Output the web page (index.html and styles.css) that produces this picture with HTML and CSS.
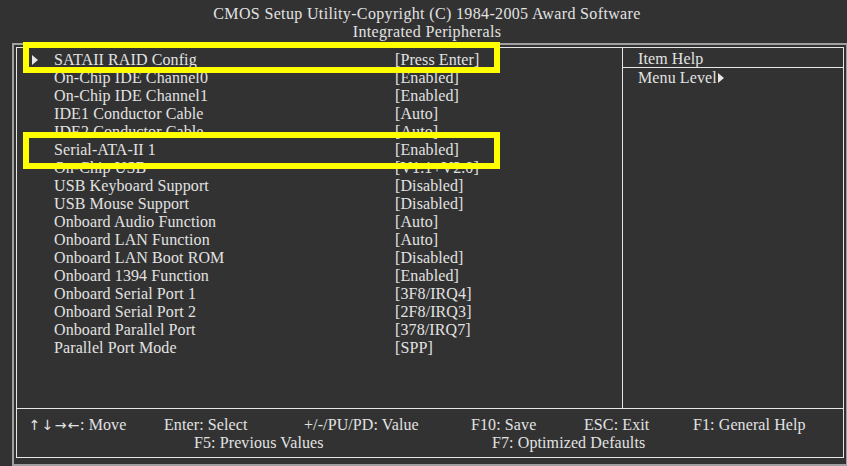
FILE: index.html
```html
<!DOCTYPE html>
<html>
<head>
<meta charset="utf-8">
<link rel="stylesheet" href="styles.css">
</head>
<body>
<div class="screen">
  <header class="title">
    <div>CMOS Setup Utility-Copyright (C) 1984-2005 Award Software</div>
    <div>Integrated Peripherals</div>
  </header>
  <div class="frame">
    <div class="inner">
      <div class="main">
        <div class="list">
          <div class="row"><span class="mark"><svg width="6" height="10" viewBox="0 0 6 10"><polygon points="0,0 6,5 0,10" fill="#e6e6e6"/></svg></span><span class="label">SATAII RAID Config</span><span class="value">[Press Enter]</span></div>
          <div class="row"><span class="mark"></span><span class="label">On-Chip IDE Channel0</span><span class="value">[Enabled]</span></div>
          <div class="row"><span class="mark"></span><span class="label">On-Chip IDE Channel1</span><span class="value">[Enabled]</span></div>
          <div class="row"><span class="mark"></span><span class="label">IDE1 Conductor Cable</span><span class="value">[Auto]</span></div>
          <div class="row"><span class="mark"></span><span class="label">IDE2 Conductor Cable</span><span class="value">[Auto]</span></div>
          <div class="row"><span class="mark"></span><span class="label">Serial-ATA-II 1</span><span class="value">[Enabled]</span></div>
          <div class="row"><span class="mark"></span><span class="label">On-Chip USB</span><span class="value">[V1.1+V2.0]</span></div>
          <div class="row"><span class="mark"></span><span class="label">USB Keyboard Support</span><span class="value">[Disabled]</span></div>
          <div class="row"><span class="mark"></span><span class="label">USB Mouse Support</span><span class="value">[Disabled]</span></div>
          <div class="row"><span class="mark"></span><span class="label">Onboard Audio Function</span><span class="value">[Auto]</span></div>
          <div class="row"><span class="mark"></span><span class="label">Onboard LAN Function</span><span class="value">[Auto]</span></div>
          <div class="row"><span class="mark"></span><span class="label">Onboard LAN Boot ROM</span><span class="value">[Disabled]</span></div>
          <div class="row"><span class="mark"></span><span class="label">Onboard 1394 Function</span><span class="value">[Enabled]</span></div>
          <div class="row"><span class="mark"></span><span class="label">Onboard Serial Port 1</span><span class="value">[3F8/IRQ4]</span></div>
          <div class="row"><span class="mark"></span><span class="label">Onboard Serial Port 2</span><span class="value">[2F8/IRQ3]</span></div>
          <div class="row"><span class="mark"></span><span class="label">Onboard Parallel Port</span><span class="value">[378/IRQ7]</span></div>
          <div class="row"><span class="mark"></span><span class="label">Parallel Port Mode</span><span class="value">[SPP]</span></div>
        </div>
        <div class="help">
          <div class="help-head">Item Help</div>
          <div class="help-body">Menu Level<svg class="lvl" width="6" height="10" viewBox="0 0 6 10"><polygon points="0,0 6,5 0,10" fill="#e6e6e6"/></svg></div>
        </div>
      </div>
      <div class="footer">
        <span class="c1"><span class="arrows"><span class="ar">↑</span><span class="ar">↓</span><span class="ar">→</span><span class="ar">←</span></span>: Move</span>
        <span class="c2">Enter: Select</span>
        <span class="c4">+/-/PU/PD: Value</span>
        <span class="c5">F10: Save</span>
        <span class="c7">ESC: Exit</span>
        <span class="c8">F1: General Help</span>
        <span class="c3 l2">F5: Previous Values</span>
        <span class="c6 l2">F7: Optimized Defaults</span>
      </div>
    </div>
  </div>
  <div class="hl hl-a"></div>
  <div class="hl hl-b"></div>
</div>
</body>
</html>
```
FILE: styles.css
```css
html, body {
  margin: 0;
  padding: 0;
  background: #323232;
}
.screen {
  position: relative;
  width: 847px;
  height: 466px;
  background: #323232;
  color: #e2e2e2;
  font-family: "Liberation Serif", "Times New Roman", serif;
  font-size: 16px;
  letter-spacing: 0.1px;
  overflow: hidden;
}
.title {
  padding-top: 5px;
  padding-left: 7px;
  line-height: 18px;
  height: 38px;
  text-align: center;
  letter-spacing: 0.35px;
}
.frame {
  margin-left: 12px;
  width: 828px;
  height: 415px;
  border: 2px solid #a0a0a0;
  padding: 2px;
}
.inner {
  height: 409px;
  border: 1px solid #e6e6e6;
  display: flex;
  flex-direction: column;
}
.main {
  height: 360px;
  display: flex;
  border-bottom: 1px solid #e6e6e6;
}
.list {
  width: 605px;
  padding-top: 3px;
  border-right: 1px solid #e6e6e6;
}
.row {
  display: grid;
  grid-template-columns: 37px 341px auto;
  line-height: 18px;
  height: 18px;
  white-space: nowrap;
}
.mark {
  display: flex;
  align-items: center;
  padding-left: 15px;
}
.help {
  flex: 1;
  display: flex;
  flex-direction: column;
}
.help-head {
  padding-top: 3px;
  height: 16px;
  line-height: 16px;
  padding-left: 15px;
  border-bottom: 1px solid #e6e6e6;
}
.help-body {
  padding-top: 1px;
  padding-left: 15px;
  line-height: 18px;
  display: flex;
  align-items: center;
  height: 18px;
}
.lvl {
  margin-left: 1px;
}
.footer {
  flex: 1;
  padding-top: 7px;
  padding-left: 11px;
  display: grid;
  grid-template-columns: 136px 30px 110px 167px 21px 92px 109px auto;
  grid-template-rows: 18px 18px;
  line-height: 18px;
  white-space: nowrap;
}
.arrows {
  font-family: "DejaVu Sans", sans-serif;
  font-size: 14px;
  letter-spacing: 0;
}
.ar {
  display: inline-block;
  width: 13px;
  text-align: center;
}
.c1 { grid-column: 1; grid-row: 1; }
.c2 { grid-column: 2; grid-row: 1; }
.c3 { grid-column: 3; grid-row: 2; }
.c4 { grid-column: 4; grid-row: 1; }
.c5 { grid-column: 5; grid-row: 1; }
.c6 { grid-column: 6; grid-row: 2; }
.c7 { grid-column: 7; grid-row: 1; }
.c8 { grid-column: 8; grid-row: 1; }
.hl {
  position: absolute;
  border: 6px solid #ffff00;
  box-sizing: border-box;
}
.hl-a {
  left: 23px;
  top: 42px;
  width: 477px;
  height: 31px;
}
.hl-b {
  left: 23px;
  top: 132px;
  width: 477px;
  height: 37px;
}
```
